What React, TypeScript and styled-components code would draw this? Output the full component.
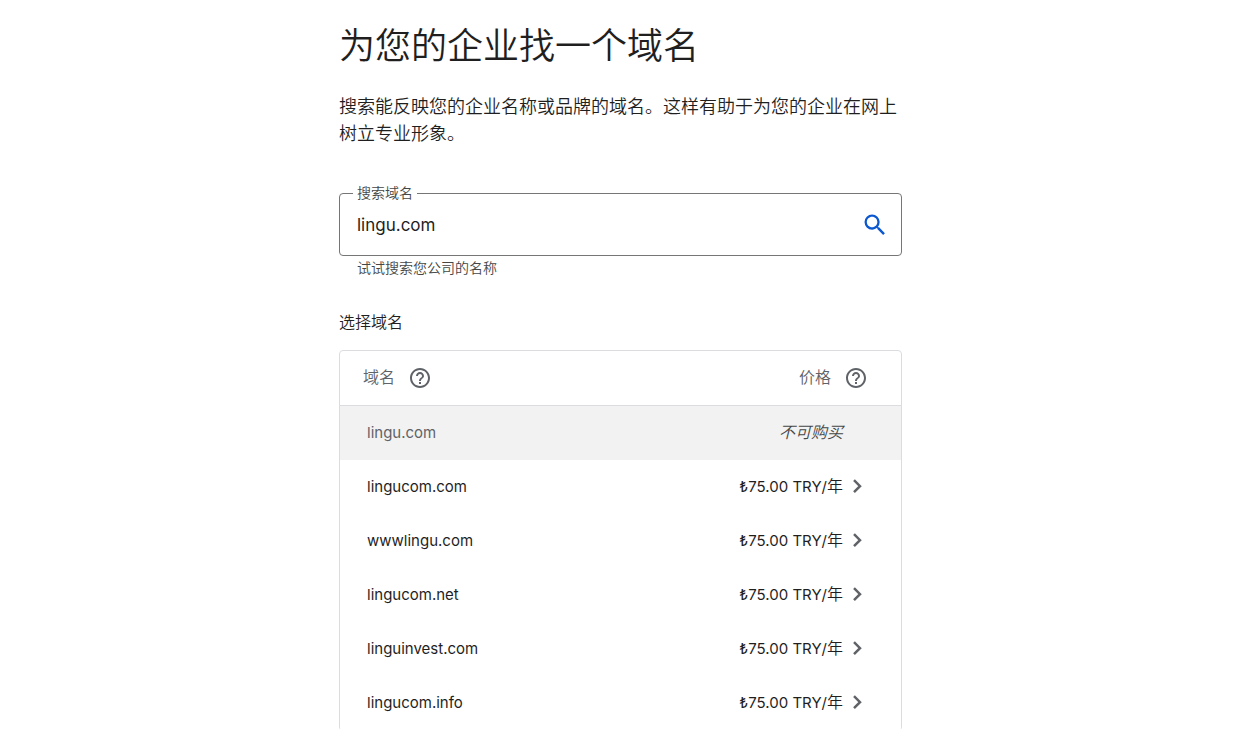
import React, { useState } from 'react';
import styled, { createGlobalStyle } from 'styled-components';

const GlobalStyle = createGlobalStyle`
  *, *::before, *::after { box-sizing: border-box; }
  body {
    margin: 0;
    background: #fff;
    color: #1f1f1f;
    font-family: Inter, "Noto Sans CJK SC", sans-serif;
    font-size: 16px;
    font-weight: 350;
  }
`;

const Page = styled.main`
  height: 100vh;
  overflow: hidden;
  padding: 19px 23px 0 25px;
`;

const Content = styled.div`
  max-width: 563px;
  margin: 0 auto;
`;

const Title = styled.h1`
  margin: 0;
  font-size: 36px;
  line-height: 54px;
  font-weight: 350;
`;

const Intro = styled.p`
  margin: 20px 0 0;
  font-size: 18px;
  line-height: 27px;
`;

const SearchForm = styled.form`
  margin-top: 37px;
`;

const Field = styled.fieldset`
  display: flex;
  align-items: center;
  height: 72px;
  margin: 0;
  min-width: 0;
  padding: 0 12px 8px 17px;
  border: 1px solid #747775;
  border-radius: 4px;
`;

const FieldLabel = styled.legend`
  margin-left: -4px;
  padding: 0 4px;
  color: #444746;
  font-size: 14px;
  line-height: 18px;
`;

const SearchInput = styled.input`
  flex: 1;
  min-width: 0;
  padding: 0;
  border: 0;
  outline: 0;
  background: none;
  color: inherit;
  font: inherit;
  font-size: 17px;
  font-weight: 400;
  line-height: 28px;
`;

const IconButton = styled.button`
  display: inline-flex;
  padding: 0;
  border: 0;
  background: none;
  color: ${({ $accent }: { $accent?: boolean }) => ($accent ? '#0b57d0' : '#5f6368')};
  cursor: pointer;
`;

const Hint = styled.p`
  margin: 2px 0 0 18px;
  color: #444746;
  font-size: 14px;
  line-height: 20px;
`;

const SectionTitle = styled.h2`
  margin: 32px 0 16px;
  font-size: 16px;
  line-height: 24px;
  font-weight: 350;
`;

const TableFrame = styled.div`
  overflow: hidden;
  border: 1px solid #dadce0;
  border-radius: 4px;
`;

const Table = styled.table`
  width: 100%;
  border-collapse: separate;
  border-spacing: 0;
  line-height: 24px;
`;

const HeadCell = styled.th<{ $end?: boolean }>`
  height: 55px;
  padding: ${({ $end }) => ($end ? '0 33px 0 0' : '0 0 0 23px')};
  border-bottom: 1px solid #dadce0;
  color: #5f6368;
  font-weight: 350;
`;

const Group = styled.div<{ $end?: boolean; $gap: number }>`
  display: flex;
  align-items: center;
  justify-content: ${({ $end }) => ($end ? 'flex-end' : 'flex-start')};
  gap: ${({ $gap }) => $gap}px;
`;

const Caption = styled.span`
  padding-bottom: 2px;
`;

const Row = styled.tr<{ $disabled?: boolean }>`
  background: ${({ $disabled }) => ($disabled ? '#f2f2f2' : '#fff')};
  color: ${({ $disabled }) => ($disabled ? '#5f6368' : '#1f1f1f')};
`;

const NameCell = styled.td`
  height: 54px;
  padding: 0 0 0 27px;
  font-size: 15px;
  font-weight: 400;
`;

const PriceCell = styled.td<{ $disabled?: boolean }>`
  padding: 0 ${({ $disabled }) => ($disabled ? 58 : 32)}px 2px 0;
  color: ${({ $disabled }) => ($disabled ? '#444746' : 'inherit')};
  text-align: right;
  font-size: ${({ $disabled }) => ($disabled ? 16 : 15)}px;
  font-weight: ${({ $disabled }) => ($disabled ? 350 : 400)};
  font-style: ${({ $disabled }) => ($disabled ? 'italic' : 'normal')};
`;

const Period = styled.span`
  font-size: 16px;
  font-weight: 350;
`;

const SearchIcon = () => (
  <svg width="28" height="28" viewBox="0 0 24 24" fill="currentColor" aria-hidden="true">
    <path d="M15.5 14h-.79l-.28-.27A6.47 6.47 0 0 0 16 9.5 6.5 6.5 0 1 0 9.5 16c1.61 0 3.09-.59 4.23-1.57l.27.28v.79l5 4.99L20.49 19l-4.99-5zm-6 0C7.01 14 5 11.99 5 9.5S7.01 5 9.5 5 14 7.01 14 9.5 11.99 14 9.5 14z" />
  </svg>
);

const HelpIcon = () => (
  <svg width="24" height="24" viewBox="0 0 24 24" fill="currentColor" aria-hidden="true">
    <path
      d="M11 18h2v-2h-2v2zm1-16C6.48 2 2 6.48 2 12s4.48 10 10 10 10-4.48 10-10S17.52 2 12 2zm0 18c-4.41 0-8-3.59-8-8s3.59-8 8-8 8 3.59 8 8-3.59 8-8 8zm0-14c-2.21 0-4 1.79-4 4h2c0-1.1.9-2 2-2s2 .9 2 2c0 2-3 1.75-3 5h2c0-2.25 3-2.5 3-5 0-2.21-1.79-4-4-4z"
    />
  </svg>
);

const ChevronIcon = () => (
  <svg width="24" height="24" viewBox="0 0 24 24" fill="none" stroke="currentColor" strokeWidth="2.5" aria-hidden="true">
    <path d="M9 6.2l6 6-6 6" />
  </svg>
);

const offers = ['lingucom.com', 'wwwlingu.com', 'lingucom.net', 'linguinvest.com', 'lingucom.info'];

export default function App() {
  const [query, setQuery] = useState('lingu.com');

  return (
    <>
      <GlobalStyle />
      <Page lang="zh-CN">
        <Content>
          <Title>为您的企业找一个域名</Title>
          <Intro>搜索能反映您的企业名称或品牌的域名。这样有助于为您的企业在网上树立专业形象。</Intro>

          <SearchForm onSubmit={(e) => e.preventDefault()}>
            <Field>
              <FieldLabel>
                <label htmlFor="domain">搜索域名</label>
              </FieldLabel>
              <SearchInput
                id="domain"
                type="text"
                value={query}
                onChange={(e) => setQuery(e.target.value)}
                aria-describedby="domain-hint"
              />
              <IconButton $accent type="submit" aria-label="搜索">
                <SearchIcon />
              </IconButton>
            </Field>
            <Hint id="domain-hint">试试搜索您公司的名称</Hint>
          </SearchForm>

          <SectionTitle>选择域名</SectionTitle>
          <TableFrame>
            <Table>
              <thead>
                <tr>
                  <HeadCell scope="col">
                    <Group $gap={13}>
                      <Caption>域名</Caption>
                      <IconButton type="button" aria-label="域名帮助">
                        <HelpIcon />
                      </IconButton>
                    </Group>
                  </HeadCell>
                  <HeadCell scope="col" $end>
                    <Group $gap={13} $end>
                      <Caption>价格</Caption>
                      <IconButton type="button" aria-label="价格帮助">
                        <HelpIcon />
                      </IconButton>
                    </Group>
                  </HeadCell>
                </tr>
              </thead>
              <tbody>
                <Row $disabled>
                  <NameCell>lingu.com</NameCell>
                  <PriceCell $disabled>不可购买</PriceCell>
                </Row>
                {offers.map((name) => (
                  <Row key={name}>
                    <NameCell>{name}</NameCell>
                    <PriceCell>
                      <Group $gap={2} $end>
                        <span>
                          ₺75.00 TRY/<Period>年</Period>
                        </span>
                        <IconButton type="button" aria-label={`选择 ${name}`}>
                          <ChevronIcon />
                        </IconButton>
                      </Group>
                    </PriceCell>
                  </Row>
                ))}
              </tbody>
            </Table>
          </TableFrame>
        </Content>
      </Page>
    </>
  );
}
